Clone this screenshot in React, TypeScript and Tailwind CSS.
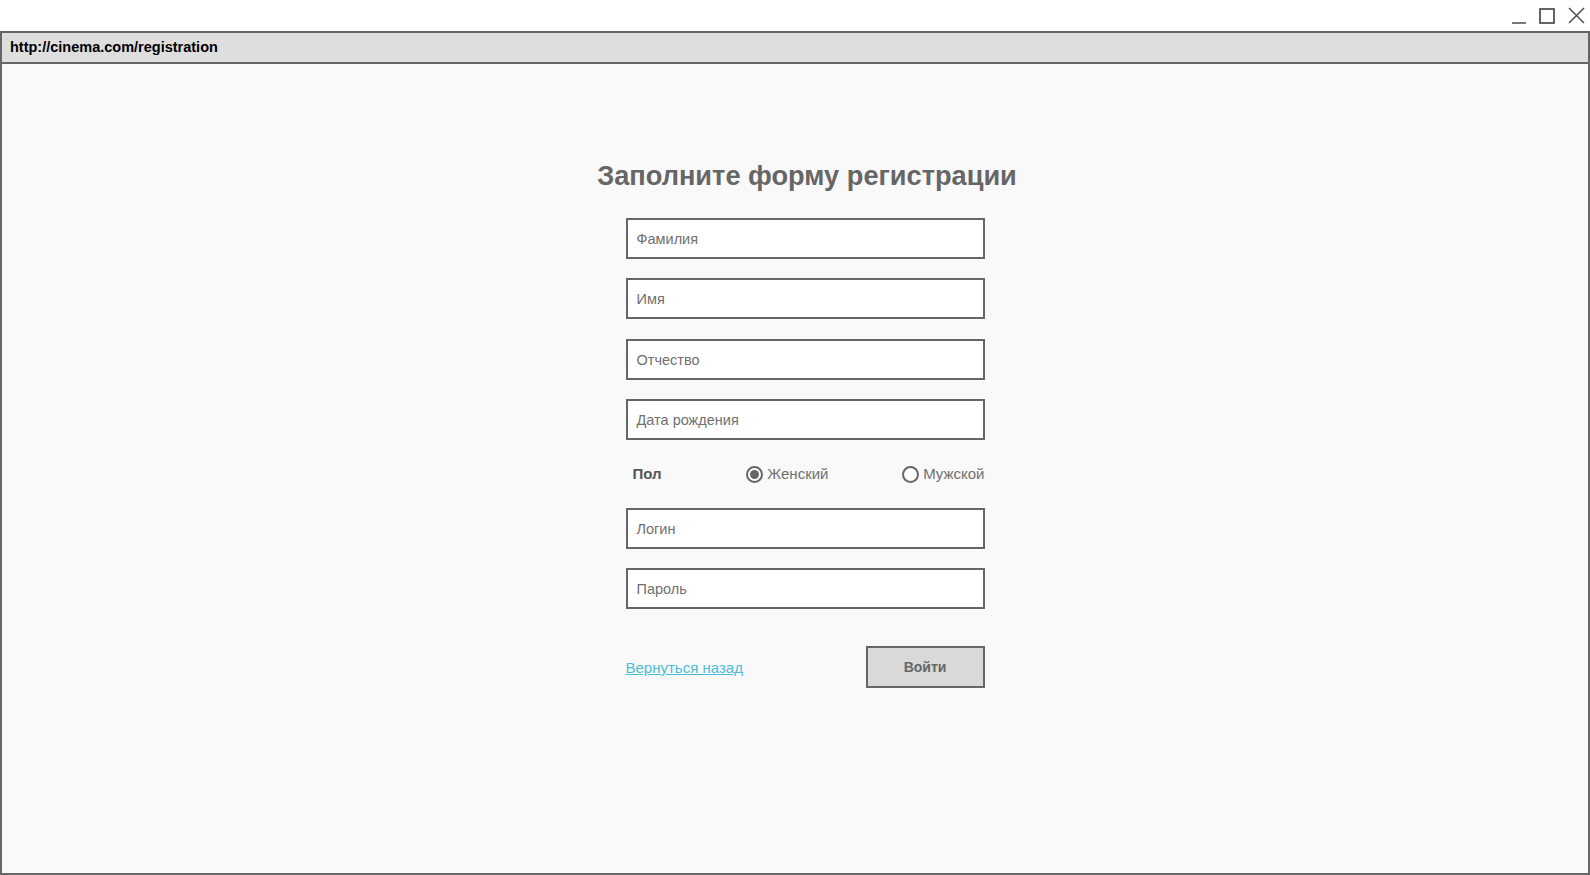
const fields = ['Фамилия', 'Имя', 'Отчество', 'Дата рождения'];
const account = ['Логин', 'Пароль'];

function Field({ label, className = '' }: { label: string; className?: string }) {
  return (
    <div className={`h-[41px] w-[359px] border-2 border-[#666666] bg-white flex items-center pl-[9px] pt-[2px] ${className}`}>
      <span className="text-[14.5px] text-[#707070]">{label}</span>
    </div>
  );
}

function Radio({ checked }: { checked?: boolean }) {
  return (
    <span className="w-[17px] h-[17px] rounded-full border-2 border-[#666666] bg-white flex items-center justify-center">
      {checked && <span className="w-[9px] h-[9px] rounded-full bg-[#666666]" />}
    </span>
  );
}

export default function App() {
  return (
    <div className="h-[875px] w-full flex flex-col bg-white font-['Liberation_Sans',Arial,sans-serif]">
      {/* window controls */}
      <div className="h-[31px] flex justify-end items-start pr-[5px] pt-[7px] gap-[13px] text-[#555555]">
        <svg width="14" height="16" viewBox="0 0 14 16" className="mt-[1px]">
          <line x1="0" y1="15" x2="14" y2="15" stroke="currentColor" strokeWidth="1.6" />
        </svg>
        <svg width="16" height="16" viewBox="0 0 16 16" className="mt-[1px]">
          <rect x="1" y="1" width="14" height="14" fill="none" stroke="currentColor" strokeWidth="1.8" />
        </svg>
        <svg width="17" height="17" viewBox="0 0 17 17">
          <path d="M1 1 L16 16 M16 1 L1 16" stroke="currentColor" strokeWidth="1.6" />
        </svg>
      </div>

      <div className="flex-1 flex flex-col border-2 border-[#666666]">
        <div className="h-[31px] bg-[#dedede] border-b-2 border-[#666666] flex items-center pl-[8px] pt-[1px]">
          <span className="text-[14.5px] font-bold text-black">http://cinema.com/registration</span>
        </div>

        <div className="flex-1 bg-[#f9f9f9] flex justify-center pl-[20px]">
          <div className="flex flex-col items-center pt-[96px]">
            <h1 className="ml-[4px] text-[27.2px] leading-[32px] font-bold text-[#666666]">Заполните форму регистрации</h1>

            <div className="mt-[26px] flex flex-col">
              {fields.map((f, i) => (
                <Field key={f} label={f} className={i === 0 ? '' : i === 2 ? 'mt-[20px]' : 'mt-[19px]'} />
              ))}
            </div>

            <div className="mt-[19px] h-[31px] w-[359px] flex items-center text-[15px]">
              <span className="w-[121px] pl-[7px] font-bold text-[#555555]">Пол</span>
              <div className="w-[156px] flex items-center gap-[4px] text-[#707070]">
                <Radio checked />
                <span>Женский</span>
              </div>
              <div className="flex items-center gap-[4px] text-[#707070]">
                <Radio />
                <span>Мужской</span>
              </div>
            </div>

            <div className="mt-[18px] flex flex-col gap-[19px]">
              {account.map((f) => (
                <Field key={f} label={f} />
              ))}
            </div>

            <div className="mt-[37px] w-[359px] flex items-center justify-between">
              <a href="#" className="text-[15px] text-[#4cbdd8] underline mt-[2px]">Вернуться назад</a>
              <button className="h-[42px] w-[119px] bg-[#d9d9d9] border-2 border-[#666666] text-[14px] font-bold text-[#666666]">
                Войти
              </button>
            </div>
          </div>
        </div>
      </div>
    </div>
  );
}
